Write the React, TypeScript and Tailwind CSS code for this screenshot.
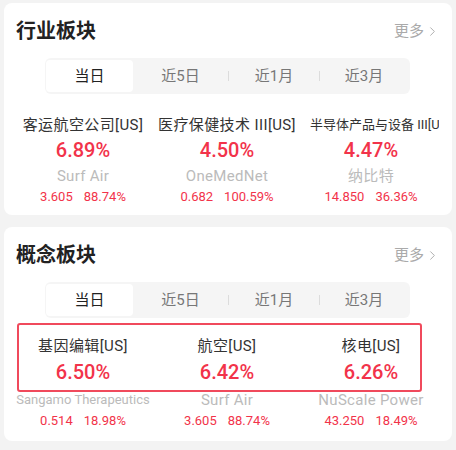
import { ChevronRight } from "lucide-react";

type Item = {
  name: string;
  pct: string;
  stock: string;
  price: string;
  chg: string;
  small?: boolean;
  clip?: boolean;
};

const industry: Item[] = [
  { name: "客运航空公司[US]", pct: "6.89%", stock: "Surf Air", price: "3.605", chg: "88.74%" },
  { name: "医疗保健技术 III[US]", pct: "4.50%", stock: "OneMedNet", price: "0.682", chg: "100.59%" },
  { name: "半导体产品与设备 III[US]", pct: "4.47%", stock: "纳比特", price: "14.850", chg: "36.36%", clip: true },
];

const concept: Item[] = [
  { name: "基因编辑[US]", pct: "6.50%", stock: "Sangamo Therapeutics", price: "0.514", chg: "18.98%", small: true },
  { name: "航空[US]", pct: "6.42%", stock: "Surf Air", price: "3.605", chg: "88.74%" },
  { name: "核电[US]", pct: "6.26%", stock: "NuScale Power", price: "43.250", chg: "18.49%" },
];

const font = { fontFamily: 'Roboto, "Noto Sans CJK SC", sans-serif' };

function Header({ title }: { title: string }) {
  return (
    <div className="flex items-center justify-between pt-4 pl-3 pr-3">
      <h2 className="h-6 leading-6 text-[20px] font-semibold text-[#222]">{title}</h2>
      <button className="flex items-center text-[15px] text-[#aaa] leading-6">
        更多
        <ChevronRight className="w-[15px] h-[15px] ml-[1px]" strokeWidth={1.5} />
      </button>
    </div>
  );
}

function Tabs() {
  return (
    <div className="mt-[15px] ml-[41px] w-[365px] h-9 rounded-md bg-[#f5f5f5] flex items-center pl-[1px] pr-[2px]">
      <div className="w-[87px] h-8 rounded bg-white flex items-center justify-center text-[15px] text-[#222]">
        当日
      </div>
      <div className="w-[95px] text-center text-[15px] text-[#777]">近5日</div>
      <div className="w-px h-[10px] bg-[#dcdcdc]" />
      <div className="w-[90px] text-center text-[15px] text-[#777]">近1月</div>
      <div className="w-px h-[10px] bg-[#dcdcdc]" />
      <div className="flex-1 text-center text-[15px] text-[#777]">近3月</div>
    </div>
  );
}

function Name({ it }: { it: Item }) {
  if (it.clip) {
    return (
      <div className="ml-[11px] w-[129px] h-5 leading-5 overflow-hidden whitespace-nowrap text-[13px] text-[#333]">
        {it.name}
      </div>
    );
  }
  return (
    <div className="h-5 leading-5 text-center whitespace-nowrap text-[15px] tracking-[0.4px] text-[#333]">
      {it.name}
    </div>
  );
}

function Pct({ it, mt }: { it: Item; mt: string }) {
  return (
    <div className={`${mt} h-[26px] leading-[26px] text-center text-[20px] font-medium text-[#f2334a]`}>{it.pct}</div>
  );
}

function Quote({ it }: { it: Item }) {
  return (
    <div className="flex justify-center gap-[11px] text-[13px] leading-[18px] text-[#f2334a]">
      <span>{it.price}</span>
      <span>{it.chg}</span>
    </div>
  );
}

export default function App() {
  return (
    <div className="min-h-[450px] bg-[#f3f3f3] pt-[3px] px-1" style={font}>
      <section className="bg-white rounded-lg pb-[9px]">
        <Header title="行业板块" />
        <Tabs />
        <div className="mt-[21px] pl-[7px] grid grid-cols-[144px_144px_144px]">
          {industry.map((it) => (
            <div key={it.name}>
              <Name it={it} />
              <Pct it={it} mt="mt-[2px]" />
              <div className="mt-[3px] h-5 leading-5 text-center text-[15px] tracking-[0.3px] text-[#bbb]">{it.stock}</div>
              <div className="mt-[2px]">
                <Quote it={it} />
              </div>
            </div>
          ))}
        </div>
      </section>

      <section className="mt-3 bg-white rounded-lg pb-[11px]">
        <Header title="概念板块" />
        <Tabs />
        <div className="mt-[5px] ml-[13px] w-[405px] h-[69px] border-2 border-[#f04a5c] rounded-[3px] pt-[11px]">
          <div className="-ml-[8px] grid grid-cols-[144px_144px_144px]">
            {concept.map((it) => (
              <div key={it.name}>
                <Name it={it} />
                <Pct it={it} mt="mt-[3px]" />
              </div>
            ))}
          </div>
        </div>
        <div className="pl-[7px] grid grid-cols-[144px_144px_144px]">
          {concept.map((it) => (
            <div key={it.name}>
              <div
                className={`h-4 leading-4 text-center whitespace-nowrap text-[#bbb] ${
                  it.small ? "text-[13px]" : "text-[15px] tracking-[0.3px]"
                }`}
              >
                {it.stock}
              </div>
              <div className="mt-[4px]">
                <Quote it={it} />
              </div>
            </div>
          ))}
        </div>
      </section>
    </div>
  );
}
